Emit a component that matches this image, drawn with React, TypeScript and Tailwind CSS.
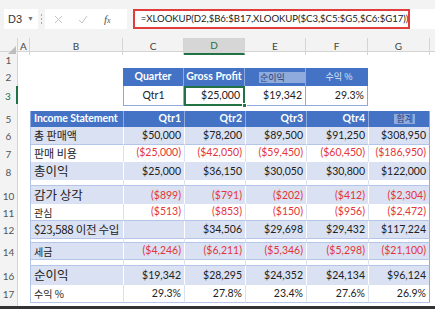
import React from "react";

type Cell = { v: string; red?: boolean };
type IncomeRow = {
  n: number;
  h: string;
  label: string;
  labelCls: string;
  vals: Cell[];
  tint: boolean;
};

const GRID = "grid grid-cols-[18px_12px_93px_61px_61px_61px_62px_62px_1fr]";
const KR = "font-['Noto_Sans_CJK_KR','Noto_Sans',sans-serif]";

const c = (v: string, red = false): Cell => ({ v, red });

const rows: IncomeRow[] = [
  { n: 6, h: "h-[18px]", label: "총 판매액", labelCls: "text-[11px]", tint: true, vals: [c("$50,000"), c("$78,200"), c("$89,500"), c("$91,250"), c("$308,950")] },
  { n: 7, h: "h-[17px]", label: "판매 비용", labelCls: "text-[11px]", tint: false, vals: [c("($25,000)", true), c("($42,050)", true), c("($59,450)", true), c("($60,450)", true), c("($186,950)", true)] },
  { n: 8, h: "h-[18px]", label: "총이익", labelCls: "text-[12.5px]", tint: true, vals: [c("$25,000"), c("$36,150"), c("$30,050"), c("$30,800"), c("$122,000")] },
  { n: 9, h: "h-[6px]", label: "", labelCls: "", tint: false, vals: [c(""), c(""), c(""), c(""), c("")] },
  { n: 10, h: "h-[18px]", label: "감가 상각", labelCls: "text-[12.5px]", tint: true, vals: [c("($899)", true), c("($791)", true), c("($202)", true), c("($412)", true), c("($2,304)", true)] },
  { n: 11, h: "h-[17px]", label: "관심", labelCls: "text-[10px]", tint: false, vals: [c("($513)", true), c("($853)", true), c("($150)", true), c("($956)", true), c("($2,472)", true)] },
  { n: 12, h: "h-[18px]", label: "$23,588 이전 수입", labelCls: "text-[11.5px] tracking-[-0.3px]", tint: true, vals: [c(""), c("$34,506"), c("$29,698"), c("$29,432"), c("$117,224")] },
  { n: 13, h: "h-[4px]", label: "", labelCls: "", tint: false, vals: [c(""), c(""), c(""), c(""), c("")] },
  { n: 14, h: "h-[17px]", label: "세금", labelCls: "text-[10px]", tint: true, vals: [c("($4,246)", true), c("($6,211)", true), c("($5,346)", true), c("($5,298)", true), c("($21,100)", true)] },
  { n: 15, h: "h-[6px]", label: "", labelCls: "", tint: false, vals: [c(""), c(""), c(""), c(""), c("")] },
  { n: 16, h: "h-[19px]", label: "순이익", labelCls: "text-[12.5px]", tint: true, vals: [c("$19,342"), c("$28,295"), c("$24,352"), c("$24,134"), c("$96,124")] },
  { n: 17, h: "h-[18px]", label: "수익 %", labelCls: "text-[10px]", tint: false, vals: [c("29.3%"), c("27.8%"), c("23.4%"), c("27.6%"), c("26.9%")] },
];

function RowNum({ n, active }: { n?: number; active?: boolean }) {
  return (
    <div
      className={
        "flex items-center justify-center overflow-hidden border-r border-[#d4d4d4] bg-[#f3f3f3] text-[10px] leading-none text-[#555] " +
        (active ? "border-r-2 border-r-[#217346] bg-[#e1e1e1] text-[#217346]" : "")
      }
    >
      {n}
    </div>
  );
}

function FormulaBar() {
  return (
    <div className="flex h-[38px] items-start bg-[#f3f3f3] pt-[9px] font-['Liberation_Sans',sans-serif]">
      <div className="ml-[4px] flex h-[20px] w-[34px] items-center justify-between bg-white px-[4px] text-[11px] text-[#333]">
        <span>D3</span>
        <span className="text-[7px] text-[#777]">▼</span>
      </div>
      <div className="mx-[3px] mt-[5px] flex flex-col gap-[2px]">
        <span className="h-[2px] w-[1px] bg-[#aaa]" />
        <span className="h-[2px] w-[1px] bg-[#aaa]" />
        <span className="h-[2px] w-[1px] bg-[#aaa]" />
      </div>
      <div className="flex h-[20px] w-[82px] items-center bg-white pl-[8px] text-[#bdbdbd]">
        <svg width="9" height="9" viewBox="0 0 9 9" className="ml-[1px]">
          <path d="M1 1L8 8M8 1L1 8" stroke="#c4c4c4" strokeWidth="1" />
        </svg>
        <svg width="10" height="9" viewBox="0 0 10 9" className="ml-[15px]">
          <path d="M1 5L4 8L9 1" stroke="#c4c4c4" strokeWidth="1" fill="none" />
        </svg>
        <span className="ml-[16px] font-['Liberation_Serif',serif] text-[11px] italic text-[#555]">
          f<span className="text-[8px]">x</span>
        </span>
      </div>
      <div className="ml-[6px] flex h-[20px] w-[278px] items-center overflow-hidden whitespace-nowrap border-2 border-[#e03c3c] bg-white pl-[6px] font-['Lato',sans-serif] text-[9.6px] tracking-[-0.05px] text-[#222]">
        =XLOOKUP(D2,$B6:$B17,XLOOKUP($C3,$C5:$G5,$C6:$G17))
      </div>
      <div className="h-[20px] w-[25px] bg-white" />
    </div>
  );
}

function ColHeaders() {
  const cols = ["A", "B", "C", "D", "E", "F", "G"];
  return (
    <div className={GRID + " h-[14px] border-b border-[#d4d4d4] bg-[#f3f3f3] text-[10px] text-[#444]"}>
      <div className="relative border-r border-[#d4d4d4]">
        <span className="absolute bottom-[1px] right-[1px] h-0 w-0 border-b-[8px] border-l-[8px] border-b-[#bdbdbd] border-l-transparent" />
      </div>
      {cols.map((col) => (
        <div
          key={col}
          className={
            "flex items-center justify-center border-r border-[#d4d4d4] " +
            (col === "D" ? "border-b-2 border-b-[#217346] bg-[#d6d6d6] text-[#217346]" : "")
          }
        >
          {col}
        </div>
      ))}
      <div />
    </div>
  );
}

export default function App() {
  const num = "flex items-center justify-end whitespace-nowrap pr-[3px] text-[10.5px]";
  const head = "flex items-center whitespace-nowrap bg-[#4472c4] text-[10.5px] font-bold text-white";
  return (
    <div className="h-[309px] w-[435px] overflow-hidden bg-white font-['Lato','Open_Sans',sans-serif] text-[#222]">
      <FormulaBar />
      <ColHeaders />

      {/* row 1 */}
      <div className={GRID + " h-[16px]"}>
        <RowNum n={1} />
      </div>

      {/* row 2: quarter table header */}
      <div className={GRID + " h-[18px]"}>
        <RowNum n={2} />
        <div />
        <div />
        <div className={head + " justify-center border-r border-[#8ea9db]"}>Quarter</div>
        <div className={head + " justify-center border-r border-[#8ea9db]"}>Gross Profit</div>
        <div className="flex items-center border-r border-[#8ea9db] bg-[#4472c4] pl-[14px]">
          <span className={KR + " bg-[#8faadc] px-[1px] pr-[20px] text-[9px] leading-[11px] text-[#2a3f74]"}>순이익</span>
        </div>
        <div className={KR + " flex items-center justify-center bg-[#4472c4] pl-[4px] text-[9px] text-[#dfe7f7]"}>수익 %</div>
      </div>

      {/* row 3 */}
      <div className={GRID + " h-[18px]"}>
        <RowNum n={3} active />
        <div />
        <div />
        <div className="flex items-center justify-center border-b border-l border-r border-[#8ea9db] text-[10.5px]">Qtr1</div>
        <div className="relative flex items-center justify-end border-2 border-[#217346] pr-[3px] text-[10.5px]">
          $25,000
          <span className="absolute -bottom-[4px] -right-[4px] h-[5px] w-[5px] border border-white bg-[#217346]" />
        </div>
        <div className={num + " border-b border-r border-[#8ea9db]"}>$19,342</div>
        <div className={num + " border-b border-r border-[#8ea9db]"}>29.3%</div>
      </div>

      {/* row 4 */}
      <div className={GRID + " h-[7px]"}>
        <RowNum />
      </div>

      {/* row 5: income statement header */}
      <div className={GRID + " h-[16px]"}>
        <RowNum n={5} />
        <div />
        <div className={head + " border-l border-[#8ea9db] pl-[3px] tracking-[-0.1px]"}>Income Statement</div>
        {["Qtr1", "Qtr2", "Qtr3", "Qtr4"].map((q) => (
          <div key={q} className={head + " justify-end border-l border-[#8ea9db] pr-[3px]"}>
            {q}
          </div>
        ))}
        <div className={KR + " flex items-center justify-end border-l border-r border-[#8ea9db] bg-[#4472c4] pr-[14px] text-[9px] text-[#1f3a7a]"}>
          <span className="bg-[#8faadc] px-[2px] leading-[10px]">합계</span>
        </div>
      </div>

      {rows.map((r) => {
        const bg = r.tint ? "bg-[#d9e1f2]" : "bg-white";
        const vline = r.tint ? "border-l border-white" : "border-l border-[#d9e1f2]";
        const spacer = r.h === "h-[4px]" || r.h === "h-[6px]";
        return (
          <div key={r.n} className={GRID + " " + r.h}>
            <RowNum n={spacer ? undefined : r.n} />
            <div />
            <div className={KR + " flex items-center whitespace-nowrap border-b border-l border-[#b4c6e7] pl-[3px] " + bg + " " + r.labelCls}>
              {r.label}
            </div>
            {r.vals.map((cell, i) => (
              <div
                key={i}
                className={
                  num + " border-b border-b-[#b4c6e7] " + vline + " " + bg + " " +
                  (i === 4 ? "border-r border-r-[#8ea9db] " : "") +
                  (cell.red ? "text-[#e4343a]" : "text-[#222]")
                }
              >
                {cell.v}
              </div>
            ))}
          </div>
        );
      })}

      <div className={GRID + " h-[3px]"}>
        <RowNum />
      </div>
      <div className="h-[3px] bg-[#333]" />
    </div>
  );
}
